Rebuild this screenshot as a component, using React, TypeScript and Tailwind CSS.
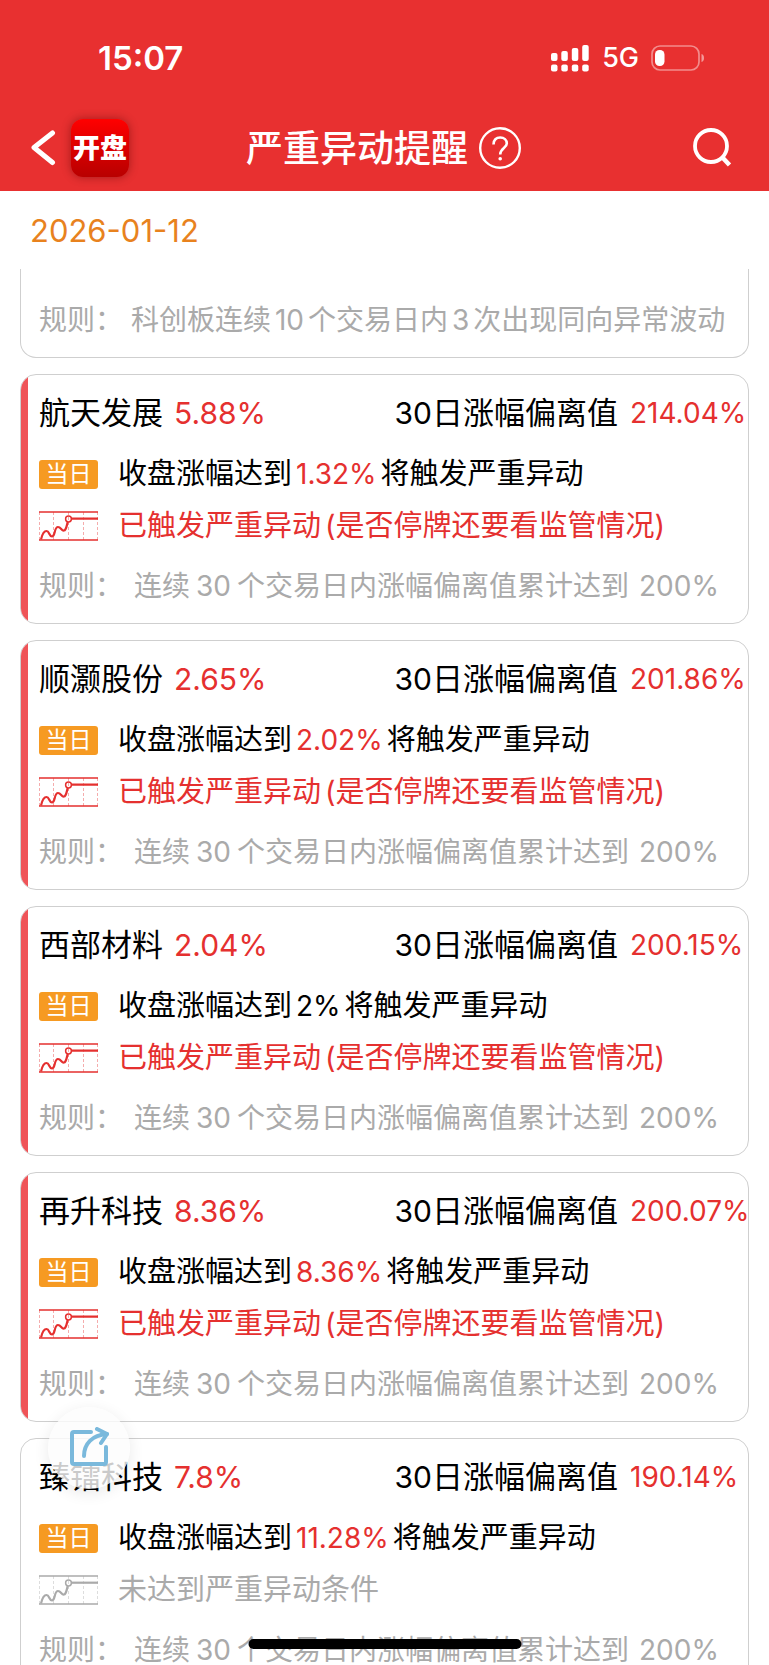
import type { ReactNode } from 'react';

type Stock = {
  name: string;
  change: string;
  deviation: string;
  target: string;
  plainTarget?: boolean;
  triggered: boolean;
};

const STOCKS: Stock[] = [
  { name: '航天发展', change: '5.88%', deviation: '214.04%', target: '1.32%', triggered: true },
  { name: '顺灏股份', change: '2.65%', deviation: '201.86%', target: '2.02%', triggered: true },
  {
    name: '西部材料',
    change: '2.04%',
    deviation: '200.15%',
    target: '2%',
    plainTarget: true,
    triggered: true,
  },
  { name: '再升科技', change: '8.36%', deviation: '200.07%', target: '8.36%', triggered: true },
  { name: '臻镭科技', change: '7.8%', deviation: '190.14%', target: '11.28%', triggered: false },
];

export default function App() {
  return (
    <div className="relative flex h-screen flex-col overflow-hidden bg-white font-['Inter','Noto_Sans_CJK_SC',sans-serif] text-black">
      <header className="shrink-0 bg-[#e83030] text-white">
        <StatusBar />
        <NavBar />
      </header>

      <div className="flex h-[78px] shrink-0 items-center px-[30px] pt-0.5 text-[31px] text-[#e8821e]">
        <time dateTime="2026-01-12">2026-01-12</time>
      </div>

      <main className="flex min-h-0 flex-1 flex-col gap-4 overflow-hidden px-5">
        {/* 上一张卡片的底部 */}
        <section className="flex h-[89px] shrink-0 items-end rounded-b-2xl border border-t-0 border-[#cfcfcf] px-[18px] pb-[17px]">
          <p className="whitespace-nowrap text-[28px] leading-10 text-[#aaaaaa]">
            规则： 科创板连续<Num>10</Num>个交易日内<Num>3</Num>次出现同向异常波动
          </p>
        </section>
        {STOCKS.map((s) => (
          <StockCard key={s.name} stock={s} />
        ))}
      </main>

      <button
        type="button"
        aria-label="分享"
        className="absolute bottom-[176px] left-12 grid size-[82px] place-items-center rounded-full bg-[#fcfcfc]/80 shadow-[0_4px_16px_rgba(0,0,0,0.09)]"
      >
        <svg
          width="40"
          height="42"
          viewBox="0 0 40 42"
          fill="none"
          stroke="#7ab9dc"
          strokeWidth="4"
          strokeLinecap="round"
          strokeLinejoin="round"
        >
          <path d="M22 5H5a2 2 0 0 0-2 2v28a2 2 0 0 0 2 2h30a2 2 0 0 0 2-2V20" />
          <path d="M15 29C15 17 23 8 38 7" />
          <path d="M28 2L38 7L32 16" />
        </svg>
      </button>

      <div className="absolute bottom-4 left-1/2 h-[10px] w-[273px] -translate-x-1/2 rounded-full bg-black" />
    </div>
  );
}

function StatusBar() {
  return (
    <div className="flex h-[105px] items-center justify-between pt-3 pr-[64px] pl-[98px]">
      <span className="text-[33px] font-semibold">15:07</span>
      <div className="flex items-center">
        <svg width="38" height="28" viewBox="0 0 38 28" fill="white" className="mr-[13px]">
          <rect x="0" y="8" width="6.5" height="8" rx="2" />
          <rect x="10.3" y="6" width="6.5" height="10" rx="2" />
          <rect x="20.8" y="3" width="6.5" height="13" rx="2" />
          <rect x="31.2" y="0" width="6.5" height="16" rx="2" />
          <rect x="0" y="19.5" width="6.5" height="7" rx="2" />
          <rect x="10.3" y="19.5" width="6.5" height="7" rx="2" />
          <rect x="20.8" y="19.5" width="6.5" height="7" rx="2" />
          <rect x="31.2" y="19.5" width="6.5" height="7" rx="2" />
        </svg>
        <span className="mr-3 text-[27px] font-medium">5G</span>
        <svg width="54" height="28" viewBox="0 0 54 28" fill="none">
          <rect x="1" y="1" width="47" height="24" rx="8" stroke="white" strokeOpacity="0.45" strokeWidth="1.7" />
          <path d="M50.5 9C52.3 9.6 53 11 53 13S52.3 16.4 50.5 17Z" fill="white" fillOpacity="0.5" />
          <rect x="4" y="5" width="9.5" height="16" rx="4.5" fill="white" />
        </svg>
      </div>
    </div>
  );
}

function NavBar() {
  return (
    <nav className="grid h-[86px] grid-cols-[1fr_auto_1fr] items-center pr-8 pl-[30px]">
      <div className="flex items-center gap-[15px]">
        <button type="button" aria-label="返回">
          <svg
            width="26"
            height="38"
            viewBox="0 0 26 38"
            fill="none"
            stroke="white"
            strokeWidth="5"
            strokeLinecap="round"
            strokeLinejoin="round"
          >
            <path d="M22.5 4L4 18.5L22.5 33.5" />
          </svg>
        </button>
        <a
          href="#"
          className="grid size-[58px] place-items-center rounded-xl bg-linear-to-b from-[#ff0000] to-[#b80000] text-[27px] leading-none font-black whitespace-nowrap shadow-[0_0_10px_rgba(80,0,0,0.45)]"
        >
          开盘
        </a>
      </div>
      <div className="flex items-center gap-[11px]">
        <h1 className="text-[37px] leading-none font-medium">严重异动提醒</h1>
        <button type="button" aria-label="说明">
          <svg width="42" height="42" viewBox="0 0 42 42" fill="none" stroke="white" strokeWidth="2.4">
            <circle cx="21" cy="21" r="19.8" />
            <path
              d="M14.5 17.5C14.5 12.8 17.3 10.5 21.2 10.5S27.8 13 27.8 16.5C27.8 21 21.2 21.3 21.2 27.5"
              strokeWidth="2.6"
            />
            <circle cx="21.2" cy="31.8" r="1.8" fill="white" stroke="none" />
          </svg>
        </button>
      </div>
      <button type="button" aria-label="搜索" className="mr-[5px] justify-self-end">
        <svg width="40" height="40" viewBox="0 0 40 40" fill="none" stroke="white" strokeWidth="3.8">
          <circle cx="19" cy="18" r="16" />
          <path d="M30 29L37.5 37" strokeWidth="4.5" />
        </svg>
      </button>
    </nav>
  );
}

function StockCard({ stock }: { stock: Stock }) {
  const { name, change, deviation, target, plainTarget, triggered } = stock;

  return (
    <section className="relative shrink-0 overflow-hidden rounded-2xl border border-[#cfcfcf] pt-4 pb-[17px] pl-[18px] whitespace-nowrap">
      {triggered && <div className="absolute inset-y-0 left-0 w-[7px] bg-[#ef5458]" />}

      <div className="flex text-[31px] leading-[44px]">
        <h2 className="flex-1">
          {name}
          <span className="ml-[11px] text-[30px] text-[#e5302f]">{change}</span>
        </h2>
        <span>
          <span className="text-[30px]">30</span>日涨幅偏离值
        </span>
        <span className="ml-3 w-[118px] text-[28px] text-[#e5302f]">{deviation}</span>
      </div>

      <div className="mt-[19px] flex items-center gap-5 text-[29px] leading-10">
        <span className="w-[59px] rounded-[3px] bg-[#f69a22] text-center text-[23px] leading-[29px] text-white">
          当日
        </span>
        <p>
          收盘涨幅达到
          <Num className={plainTarget ? 'text-[28px]' : 'text-[28px] text-[#e5302f]'}>{target}</Num>
          将触发严重异动
        </p>
      </div>

      <div
        className={`mt-3 flex items-center gap-5 text-[29px] leading-10 ${
          triggered ? 'text-[#e5302f]' : 'text-[#aaaaaa]'
        }`}
      >
        <TrendIcon />
        <p>
          {triggered ? (
            <>
              已触发严重异动<span className="ml-1">(是否停牌还要看监管情况)</span>
            </>
          ) : (
            '未达到严重异动条件'
          )}
        </p>
      </div>

      <p className="mt-5 text-[28px] leading-10 text-[#aaaaaa]">
        规则：<span className="mr-1.5 ml-[11px]">连续</span>30
        <span className="mr-2.5 ml-1.5">个交易日内涨幅偏离值累计达到</span>200%
      </p>
    </section>
  );
}

// 中文与数字之间留一点间距
function Num({ children, className = '' }: { children: ReactNode; className?: string }) {
  return <span className={`mx-1 ${className}`}>{children}</span>;
}

function TrendIcon() {
  return (
    <svg width="59" height="30" viewBox="0 0 59 30" fill="none" stroke="currentColor" className="shrink-0">
      <path d="M0 1H59M0 29H59" strokeWidth="1.3" />
      <path
        d="M.5 1V29M14.5 1V29M29.5 1V29M44.5 1V29M58.5 1V29"
        strokeWidth="1"
        strokeDasharray="3 2"
        opacity="0.4"
      />
      <path
        d="M2 28.5C3.5 22 5 20 7.5 20C10.5 20 10 25.5 13 25.5C16.5 25.5 15 16 19 16C22 16 22.5 20 25 19.5C27.5 19 27.5 14.5 28.8 11"
        strokeWidth="2.2"
      />
      <circle cx="29.5" cy="8" r="2.9" strokeWidth="1.5" />
      <path d="M32.5 7.7H59" strokeWidth="2.2" />
    </svg>
  );
}
